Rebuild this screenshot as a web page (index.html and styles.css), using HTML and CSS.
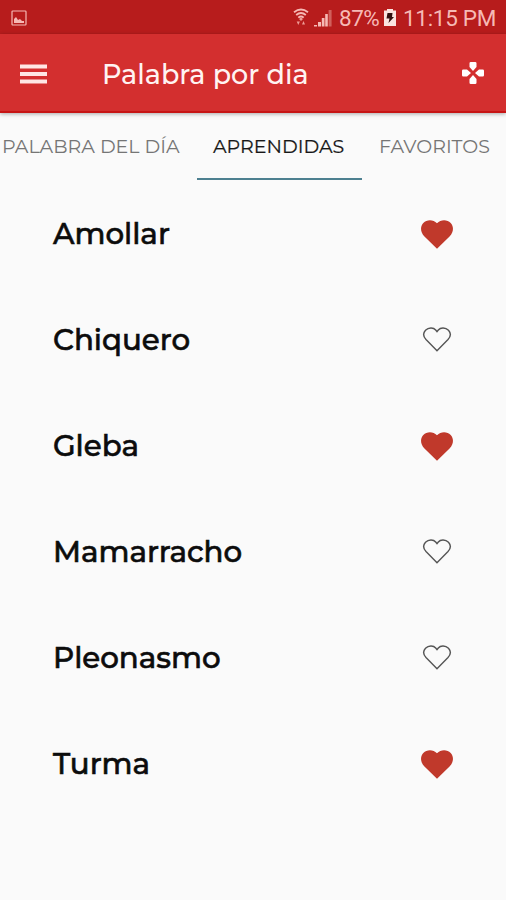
FILE: index.html
```html
<!DOCTYPE html>
<html lang="es">
<head>
<meta charset="utf-8">
<title>Palabra por dia</title>
<link rel="stylesheet" href="styles.css">
</head>
<body>
<svg class="defs" aria-hidden="true">
  <symbol id="heart-full" viewBox="0 0 32 29"><path d="M16 28.700 3.200 16.200C-.8 12.100-.9 6.300 2.300 3 6-.8 12.200-.6 16 3.200 19.800-.6 26-.8 29.700 3 32.900 6.300 32.800 12.100 28.800 16.200Z"/></symbol>
  <symbol id="heart-line" viewBox="0 0 32 29"><path d="M16 25.700 5 14.600C2.300 11.700 2.100 8 4.500 5.300 7.500 2.300 12.400 2.200 14.700 5L16 6.700 17.300 5C19.600 2.200 24.500 2.300 27.500 5.300 29.900 8 29.700 11.700 27 14.600Z"/></symbol>
</svg>
<div class="status">
  <svg class="picture" viewBox="0 0 16 16"><rect x="1" y="1" width="14" height="14" rx=".8"/><path d="M3 13V9l2-2 2 3 2-1 2 2h2v2Z"/></svg>
  <div class="indicators">
    <svg class="wifi" viewBox="0 0 16 18"><path class="arc" d="M1 4.200Q8-1.200 15 4.200M3.200 7Q8 3 12.800 7M5.300 9.600Q8 7.400 10.700 9.600"/><path d="m6 11 2-1.500L10 11l-2 2ZM3.700 13.500h3.200L5.300 17ZM9 16.500h3L10.500 13Z"/></svg>
    <svg class="signal" viewBox="0 0 18 18"><path d="M0 16h3v1.500H0ZM4 13h3v4.500H4ZM7.800 9h2.700v8.500H7.800ZM11.200 5h2.600v12.500h-2.600Z"/><path class="dim" d="M14.600 1h3v16.500h-3Z"/></svg>
    <span class="percent">87%</span>
    <svg class="battery" viewBox="0 0 12 18"><path class="cell" d="M3 0h6v1.500h3V17H0V1.500h3Z"/><path class="bolt" d="M3.500 4h5L8 8h2l-5.500 6L5.500 9.500H2.500Z"/></svg>
    <span class="clock">11:15 PM</span>
  </div>
</div>
<header class="bar">
  <svg class="menu" viewBox="0 0 27 20"><path d="M0 .5h27v4H0ZM0 8h27v4H0ZM0 15.500h27v4H0Z"/></svg>
  <h1><span>Palabra por dia</span></h1>
  <svg class="pad" viewBox="0 0 24 24"><path d="M9.800 1h4.400q1.300 0 1.300 1.300V6L12 10 8.500 6V2.300Q8.500 1 9.800 1ZM23 9.800v4.400q0 1.300-1.300 1.300H18L14 12l4-3.500h3.700q1.300 0 1.300 1.300ZM14.200 23H9.800q-1.300 0-1.300-1.300V18l3.500-4 3.500 4v3.700q0 1.300-1.300 1.300ZM1 14.200V9.800q0-1.300 1.300-1.300H6L10 12l-4 3.500H2.300Q1 15.500 1 14.200Z"/></svg>
</header>
<nav class="tabs">
  <a class="tab day"><span>PALABRA DEL DÍA</span></a>
  <a class="tab learned active"><span>APRENDIDAS</span></a>
  <a class="tab favorites"><span>FAVORITOS</span></a>
</nav>
<ul class="words">
  <li><span>Amollar</span><svg class="heart full"><use href="#heart-full"/></svg></li>
  <li><span>Chiquero</span><svg class="heart line"><use href="#heart-line"/></svg></li>
  <li><span>Gleba</span><svg class="heart full"><use href="#heart-full"/></svg></li>
  <li><span>Mamarracho</span><svg class="heart line"><use href="#heart-line"/></svg></li>
  <li><span>Pleonasmo</span><svg class="heart line"><use href="#heart-line"/></svg></li>
  <li><span>Turma</span><svg class="heart full"><use href="#heart-full"/></svg></li>
</ul>
</body>
</html>
```
FILE: styles.css
```css
* { box-sizing: border-box; }
body { margin: 0; height: 900px; overflow: hidden; background: #fafafa; font-family: Montserrat, Inter, sans-serif; }
svg { display: block; flex: none; }
.defs { display: none; }
.status { height: 34px; background: #b71c1c; color: #f6b9b5; display: flex; justify-content: space-between; align-items: center; padding: 2px 11px 0 11px; font: 22.500px/32px Roboto, sans-serif; }
.picture { width: 16px; height: 16px; fill: #f6b9b5; }
.picture rect { fill: none; stroke: #f6b9b5; stroke-width: 1.200; }
.indicators { display: flex; align-items: center; }
.wifi { width: 16px; height: 18px; fill: #ee9c96; margin-right: 5px; margin-top: -2px; }
.wifi .arc { fill: none; stroke: #f6b9b5; stroke-width: 1.800; }
.signal { width: 18px; height: 18px; fill: #f6b9b5; margin-right: 7px; margin-top: -1px; }
.signal .dim { fill: #d0605c; }
.percent { width: 40px; margin-right: 5px; white-space: nowrap; letter-spacing: -.5px; }
.battery { width: 12px; height: 18px; margin-right: 7px; margin-top: -1px; }
.cell { fill: #fbe4e0; }
.bolt { fill: #321010; }
.clock { width: 92px; white-space: nowrap; letter-spacing: -.3px; }
.bar { height: 79px; background: #d32f2f; border-bottom: 2px solid #c71515; box-shadow: 0 1px 4px #0005; display: flex; align-items: center; padding: 0 21px 0 20px; }
.menu { width: 27px; height: 20px; fill: #ffe6e4; margin-top: 2px; }
h1 { flex: 1; margin: 4px 0 0 55px; font-size: 27px; line-height: 34px; font-weight: 500; color: #fff3f2; white-space: nowrap; }
.pad { width: 24px; height: 24px; fill: #fff; margin-top: 1px; }
.tabs { height: 68px; display: flex; }
.tab { height: 67px; font-size: 19px; line-height: 68px; color: #757575; white-space: nowrap; }
.day { width: 197px; padding-left: 2px; }
.learned { width: 165px; padding-left: 16px; border-bottom: 2px solid #4d8090; }
.active { color: #171717; -webkit-text-stroke: .2px #171717; }
.favorites { padding-left: 17px; }
.words { list-style: none; margin: 0; padding: 0; }
.words li { height: 106px; padding: 0 53px; display: flex; align-items: center; justify-content: space-between; font-size: 29.300px; line-height: 36px; font-weight: 500; color: #0c0c0c; -webkit-text-stroke: .6px #0c0c0c; }
.heart { width: 32px; height: 29px; -webkit-text-stroke: 0; }
.full { fill: #c0392b; }
.line { fill: none; stroke: #555; stroke-width: 1.400; margin-top: -2px; }
```
